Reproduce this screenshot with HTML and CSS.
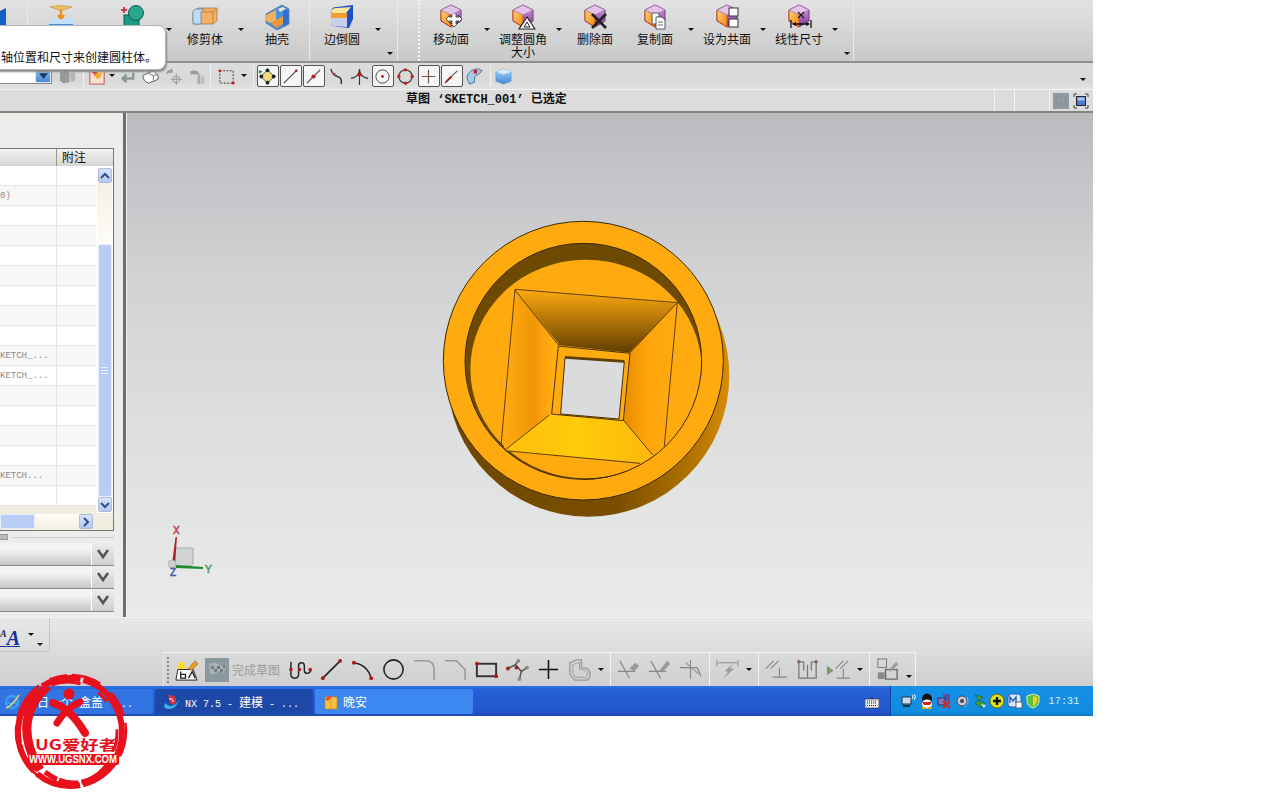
FILE: index.html
```html
<!DOCTYPE html>
<html lang="zh">
<head>
<meta charset="utf-8">
<title>NX 7.5 - 建模</title>
<link rel="stylesheet" href="styles.css">
</head>
<body>
<svg class="defs" width="0" height="0" aria-hidden="true">
  <defs>
    <linearGradient id="gOrange" x1="0" y1="0" x2="1" y2="1"><stop offset="0" stop-color="#ffd070"/><stop offset="1" stop-color="#f08a10"/></linearGradient>
    <linearGradient id="gPurple" x1="0" y1="0" x2="0" y2="1"><stop offset="0" stop-color="#d8a8e0"/><stop offset="1" stop-color="#7c3596"/></linearGradient>
    <linearGradient id="gBlue" x1="0" y1="0" x2="0" y2="1"><stop offset="0" stop-color="#a8d8f8"/><stop offset="1" stop-color="#3f86d8"/></linearGradient>
    <symbol id="cube" viewBox="0 0 26 26">
      <path d="M13 1 23 6V17L13 23 3 17V6Z" fill="url(#gPurple)" stroke="#6b3a80"/>
      <path d="M3 7Q3 5 5 6L13 11V23L5 18Q3 17 3 15Z" fill="url(#gOrange)" stroke="#d8481a"/>
      <path d="M3 6 13 1 23 6 13 11Z" fill="#e6c4ea" stroke="#9a6cae" stroke-width=".7"/>
    </symbol>
  </defs>
</svg>

<div class="screen">
  <header class="ribbon">
    <div class="group group-a">
      <svg class="icon-cut" viewBox="0 0 6 24"><path d="M0 6 6 3V20L0 23Z" fill="#1560c8"/></svg>
    </div>
    <div class="group">
      <div class="tool"><svg class="ic" viewBox="0 0 26 26"><path d="M2 3Q13 0 24 3L15 6H11Z" fill="#f0c060" stroke="#b89040" stroke-width=".6"/><path d="M13 5V14M10 11l3 4 3-4" stroke="#e89020" stroke-width="2.4" fill="none"/><path d="M1 18 5 15H25V21H1Z" fill="#bfe0f8"/><path d="M1 20H25V26H1Z" fill="#3d90e0"/></svg><span class="lbl"></span></div>
      <span class="caret none"></span>
      <div class="tool"><svg class="ic" viewBox="0 0 26 26"><path d="M1 6H7M4 3V9" stroke="#e01030" stroke-width="1.6"/><rect x="4" y="11" width="15" height="14" fill="#1d9a8a" stroke="#0c5a52"/><circle cx="16" cy="9" r="7.5" fill="#2aa690" stroke="#0d5c50"/></svg><span class="lbl"></span></div>
      <span class="caret"></span>
      <div class="tool"><svg class="ic" viewBox="0 0 26 26"><path d="M1 8 6 4H25V17L21 20H1Z" fill="#f4b060" stroke="#8a7a60" stroke-width=".7"/><path d="M1 8Q1 5 6 5H12L9 8V20H3Q1 20 1 18Z" fill="#bcdcf4" stroke="#5a80a8" stroke-width=".7"/><path d="M9 8H21V20M21 8 25 4" fill="none" stroke="#a07a40" stroke-width=".7"/></svg><span class="lbl">修剪体</span></div>
      <span class="caret"></span>
      <div class="tool"><svg class="ic" viewBox="0 0 26 26"><path d="M2 10 18 1 25 5V20L13 26 2 19Z" fill="#4a90e0" stroke="#345" stroke-width=".5"/><path d="M2 11 12 6V17L6 19 2 17Z" fill="#f0b060"/><path d="M7 19 19 12V20L12 24Z" fill="#e89838"/><path d="M19 4 24 6V20L19 23Z" fill="#2f70d0"/><path d="M14 5 19 3 22 5 16 8Z" fill="#e8e4d0"/></svg><span class="lbl">抽壳</span></div>
    </div>
    <div class="group">
      <div class="tool"><svg class="ic" viewBox="0 0 26 26"><path d="M2 8Q2 3 8 3L24 1V15L20 24 4 22Q2 22 2 20Z" fill="#1a50c8"/><path d="M2 8Q2 4 8 4L22 3 17 9H3Z" fill="#fbe69a"/><path d="M2 9H18V14H2Z" fill="#f0a030"/><path d="M2 14H18V23L4 22Q2 22 2 20Z" fill="#c8d0ec"/></svg><span class="lbl">边倒圆</span></div>
      <span class="caret"></span>
      <span class="caret low"></span>
    </div>
    <div class="group group-d">
      <div class="tool"><svg class="ic" viewBox="0 0 26 26"><use href="#cube"/><path d="M17 9v3h3l-1-2 4 4-4 4 1-2h-3v3l2-1-4 4-4-4 2 1v-3h-3l1 2-4-4 4-4-1 2h3V9" transform="translate(1 1)" fill="#fff" stroke="#333" stroke-width=".8"/></svg><span class="lbl">移动面</span></div>
      <span class="caret"></span>
      <div class="tool"><svg class="ic" viewBox="0 0 26 26"><use href="#cube"/><path d="M17 13 25 25H9Z" fill="#fff" stroke="#222" stroke-width="1.2"/><path d="M17 18 20 23H14Z" fill="none" stroke="#222"/></svg><span class="lbl">调整圆角<br>大小</span></div>
      <span class="caret"></span>
      <div class="tool"><svg class="ic" viewBox="0 0 26 26"><use href="#cube"/><path d="M10 10 24 24M24 10 10 24" stroke="#222" stroke-width="2.6"/></svg><span class="lbl">删除面</span></div>
      <div class="tool"><svg class="ic" viewBox="0 0 26 26"><use href="#cube"/><path d="M10 9H17V20H10Z" fill="#fff" stroke="#556"/><path d="M14 13H20L23 16V25H14Z" fill="#fff" stroke="#556"/><path d="M16 18H21M16 21H21" stroke="#667"/></svg><span class="lbl">复制面</span></div>
      <span class="caret"></span>
      <div class="tool"><svg class="ic" viewBox="0 0 26 26"><use href="#cube"/><rect x="15" y="4" width="9" height="8" fill="#fff" stroke="#333"/><rect x="15" y="15" width="9" height="8" fill="#fff" stroke="#333"/></svg><span class="lbl">设为共面</span></div>
      <span class="caret"></span>
      <div class="tool"><svg class="ic" viewBox="0 0 26 26"><use href="#cube"/><path d="M12 8 18 14M18 8 12 14" stroke="#222" stroke-width="1.3"/><path d="M5 16V24M25 16V24M7 20H23" stroke="#111" stroke-width="1.3" fill="none"/><path d="M6 20 10 18V22ZM24 20 20 18V22Z" fill="#111"/></svg><span class="lbl">线性尺寸</span></div>
      <span class="caret"></span>
      <span class="caret low"></span>
    </div>
  </header>

  <div class="toolbar">
    <div class="combo"><span class="combo-btn"><svg viewBox="0 0 12 8"><path d="M1 1H11L6 7Z" fill="#1d3560"/></svg></span></div>
    <span class="ib"><svg viewBox="0 0 20 20"><path d="M2 6 9 3 12 5V16L5 17 2 14Z" fill="#999"/><path d="M12 6H18V14L14 16Z" fill="#b5b5b5"/></svg></span>
    <span class="vsep vs1"></span>
    <span class="ib"><svg viewBox="0 0 20 20"><rect x="2" y="3" width="15" height="15" fill="#f8e0d0" stroke="#c05050"/><path d="M6 6H15L12 12H9Z" fill="#f0b020"/><path d="M7 3V9M4 6H10" stroke="#c01818"/></svg></span>
    <span class="caret-s"></span>
    <span class="ib"><svg viewBox="0 0 20 20"><path d="M16 6V12H6M9 8 5 12 9 16" fill="none" stroke="#8a9a8a" stroke-width="2.6"/></svg></span>
    <span class="ib"><svg viewBox="0 0 20 20"><path d="M2 9 13 4 18 9V13L8 17Q2 15 2 9Z" fill="#fff" stroke="#555"/><path d="M8 7 13 9V14M13 9 18 8" fill="none" stroke="#777"/></svg></span>
    <span class="ib ib-g"><svg viewBox="0 0 20 20"><path d="M3 7Q5 2 9 5M9 5 7 2M9 5 5 6" fill="none" stroke="#999" stroke-width="1.6"/><circle cx="13" cy="13" r="3.5" fill="none" stroke="#999"/><path d="M13 7V19M7 13H19" stroke="#999"/></svg></span>
    <span class="ib"><svg viewBox="0 0 20 20"><path d="M3 5Q8 2 13 6L10 8Q7 7 4 8Z" fill="#999"/><path d="M11 7H14V18H11Z" fill="#aaa"/><path d="M15 10H18V18H15Z" fill="#bbb"/></svg></span>
    <span class="vsep vs2"></span>
    <span class="ib"><svg viewBox="0 0 20 20"><rect x="3" y="4" width="14" height="13" fill="none" stroke="#333" stroke-dasharray="2 1.5"/><circle cx="3" cy="4" r="1.5" fill="#c02020"/><circle cx="17" cy="17" r="1.5" fill="#c02020"/></svg></span>
    <span class="caret-s wide"></span>
    <span class="vsep vs3"></span>
    <span class="bx"><svg viewBox="0 0 20 20"><path d="M10 3 17 10 10 17 3 10Z" fill="#f0dc80" stroke="#555"/><circle cx="10" cy="3.5" r="2" fill="#222"/><circle cx="10" cy="16.5" r="2" fill="#222"/><circle cx="3.5" cy="10" r="2" fill="#222"/><circle cx="16.5" cy="10" r="2" fill="#222"/><path d="M1 3 5 5 1 7Z" fill="#209030"/></svg></span>
    <span class="bx"><svg viewBox="0 0 20 20"><path d="M3 17 17 3" stroke="#444" stroke-width="1.2"/><circle cx="16" cy="4" r="1.5" fill="#c02020"/></svg></span>
    <span class="bx"><svg viewBox="0 0 20 20"><path d="M3 17 17 3" stroke="#444" stroke-width="1.2"/><circle cx="10" cy="10" r="2.2" fill="#c02020"/></svg></span>
    <span class="ib"><svg viewBox="0 0 20 20"><path d="M4 2Q6 9 11 10T15 18" fill="none" stroke="#333" stroke-width="1.4"/><circle cx="8" cy="7" r="1" fill="#c02020"/></svg></span>
    <span class="ib"><svg viewBox="0 0 20 20"><path d="M1 12Q10 10 10 2Q10 10 19 12M10 9V19" fill="none" stroke="#333" stroke-width="1.2"/><circle cx="10" cy="8" r="2" fill="#c02020"/></svg></span>
    <span class="bx"><svg viewBox="0 0 20 20"><circle cx="10" cy="10" r="7" fill="none" stroke="#444"/><circle cx="10" cy="10" r="1.5" fill="#c02020"/></svg></span>
    <span class="ib"><svg viewBox="0 0 20 20"><circle cx="10" cy="10" r="7" fill="none" stroke="#444" stroke-width="1.4"/><circle cx="10" cy="3" r="1.8" fill="#c02020"/><circle cx="10" cy="17" r="1.8" fill="#c02020"/><circle cx="3" cy="10" r="1.8" fill="#c02020"/><circle cx="17" cy="10" r="1.8" fill="#c02020"/></svg></span>
    <span class="bx"><svg viewBox="0 0 20 20"><path d="M10 3V17M3 10H17" stroke="#7a5040" stroke-width="1.2"/></svg></span>
    <span class="bx"><svg viewBox="0 0 20 20"><path d="M3 17 16 4" stroke="#555" stroke-width="1.2"/><path d="M4 16 10 10" stroke="#a02020" stroke-width="2"/></svg></span>
    <span class="ib"><svg viewBox="0 0 20 20"><path d="M2 10Q5 2 14 2L18 4 14 8Q9 8 10 16L5 18Q2 14 2 10Z" fill="#a8c8e8" stroke="#47709a"/><circle cx="11" cy="5" r="2" fill="#c02020"/></svg></span>
    <span class="vsep vs4"></span>
    <span class="ib"><svg viewBox="0 0 20 20"><path d="M2 5 10 2 18 5V15L10 18 2 15Z" fill="url(#gBlue)" stroke="#5a94c8" stroke-width=".6"/><path d="M2 5 10 8 18 5 10 2Z" fill="#d8ecfa"/></svg></span>
    <span class="caret-s end"></span>
  </div>

  <div class="status">
    <div class="status-text">草图 ‘SKETCH_001’ 已选定</div>
    <span class="st-cell c1"></span>
    <span class="st-cell c2"></span>
    <span class="st-icons">
      <span class="st-flag"><svg viewBox="0 0 16 16"><path d="M3 4H13V11H3Z" fill="#8d9a9f" stroke="#7b8a8f" stroke-dasharray="2 2"/></svg></span>
      <span class="st-full"><svg viewBox="0 0 16 16"><path d="M1 4V1H4M12 1H15V4M15 12V15H12M4 15H1V12" fill="none" stroke="#444"/><rect x="3.5" y="3.5" width="9" height="9" fill="#4a7cc8" stroke="#223"/><rect x="4.5" y="4.5" width="7" height="3" fill="#a8c8f0"/></svg></span>
    </span>
  </div>

  <main class="main">
    <aside class="panel">
      <div class="tree">
        <div class="tree-head"><span class="th-a"></span><span class="th-b">附注</span></div>
        <div class="tree-body">
          <div class="rows">
            <div class="row"><span class="cn"></span><span class="cm"></span></div>
            <div class="row"><span class="cn">0)</span><span class="cm"></span></div>
            <div class="row"><span class="cn"></span><span class="cm"></span></div>
            <div class="row"><span class="cn"></span><span class="cm"></span></div>
            <div class="row"><span class="cn"></span><span class="cm"></span></div>
            <div class="row"><span class="cn"></span><span class="cm"></span></div>
            <div class="row"><span class="cn"></span><span class="cm"></span></div>
            <div class="row"><span class="cn"></span><span class="cm"></span></div>
            <div class="row"><span class="cn"></span><span class="cm"></span></div>
            <div class="row"><span class="cn">KETCH_...</span><span class="cm"></span></div>
            <div class="row"><span class="cn">KETCH_...</span><span class="cm"></span></div>
            <div class="row"><span class="cn"></span><span class="cm"></span></div>
            <div class="row"><span class="cn"></span><span class="cm"></span></div>
            <div class="row"><span class="cn"></span><span class="cm"></span></div>
            <div class="row"><span class="cn"></span><span class="cm"></span></div>
            <div class="row"><span class="cn">KETCH...</span><span class="cm"></span></div>
            <div class="row"><span class="cn"></span><span class="cm"></span></div>
          </div>
          <div class="vscroll">
            <span class="sb-btn"><svg viewBox="0 0 12 12"><path d="M2 8 6 4 10 8" fill="none" stroke="#2e4f8c" stroke-width="2"/></svg></span>
            <span class="sb-track"></span>
            <span class="sb-thumb"><i></i></span>
            <span class="sb-btn"><svg viewBox="0 0 12 12"><path d="M2 4 6 8 10 4" fill="none" stroke="#2e4f8c" stroke-width="2"/></svg></span>
          </div>
        </div>
        <div class="hscroll">
          <span class="hs-thumb"></span>
          <span class="hs-track"></span>
          <span class="sb-btn"><svg viewBox="0 0 12 12"><path d="M4 2 8 6 4 10" fill="none" stroke="#2e4f8c" stroke-width="2"/></svg></span>
          <span class="hs-corner"></span>
        </div>
      </div>
      <div class="sash"><span class="sash-grip"></span><span class="sash-line"></span></div>
      <div class="fold"><span class="fold-main"></span><span class="fold-btn"><svg viewBox="0 0 14 12"><path d="M2 2 7 9 12 2" fill="none" stroke="#555" stroke-width="2.6"/></svg></span></div>
      <div class="fold"><span class="fold-main"></span><span class="fold-btn"><svg viewBox="0 0 14 12"><path d="M2 2 7 9 12 2" fill="none" stroke="#555" stroke-width="2.6"/></svg></span></div>
      <div class="fold"><span class="fold-main"></span><span class="fold-btn"><svg viewBox="0 0 14 12"><path d="M2 2 7 9 12 2" fill="none" stroke="#555" stroke-width="2.6"/></svg></span></div>
    </aside>
    <section class="viewport">
      <svg class="model" viewBox="0 0 930 960">
        <defs>
          <linearGradient id="mSide" x1="0" y1="0" x2="1" y2="0"><stop offset="0" stop-color="#6e4700"/><stop offset=".6" stop-color="#7a4e00"/><stop offset=".9" stop-color="#b87800"/><stop offset="1" stop-color="#d88c08"/></linearGradient>
          <linearGradient id="mTop" x1="0" y1="0" x2="0" y2="1"><stop offset="0" stop-color="#ffab10"/><stop offset=".45" stop-color="#b87808"/><stop offset="1" stop-color="#5e3e00"/></linearGradient>
          <linearGradient id="mLeft" x1="0" y1="0" x2="1" y2="0"><stop offset="0" stop-color="#ffab10"/><stop offset=".55" stop-color="#f09608"/><stop offset=".75" stop-color="#ffa40c"/><stop offset="1" stop-color="#ffb414"/></linearGradient>
          <linearGradient id="mRight" x1="0" y1="0" x2="1" y2="0"><stop offset="0" stop-color="#e88c00"/><stop offset=".45" stop-color="#ffa40c"/><stop offset="1" stop-color="#ffab10"/></linearGradient>
          <linearGradient id="mBot" x1="0" y1="0" x2="1" y2="0"><stop offset="0" stop-color="#ffbe0c"/><stop offset=".5" stop-color="#ffcb0a"/><stop offset="1" stop-color="#ffb80c"/></linearGradient>
        </defs>
        <circle cx="475" cy="497" r="423" fill="url(#mSide)"/>
        <ellipse cx="460" cy="452" rx="420" ry="418" fill="#ffab10" stroke="#3e2a00" stroke-width="3"/>
        <ellipse cx="460" cy="454" rx="355" ry="354" fill="#6e4a00" stroke="#3e2a00" stroke-width="3"/>
        <ellipse cx="468" cy="477" rx="347" ry="328" fill="#ffab10"/>
        <path d="M460 808A355 354 0 0 0 815 454" fill="none" stroke="#3e2a00" stroke-width="3"/>
        <path d="M255 238 742 278 670 735 225 722Z" fill="#ffab10"/>
        <path d="M255 238 385 405 600 428 740 280Z" fill="url(#mTop)"/>
        <path d="M255 240 385 400 365 612 222 715Z" fill="url(#mLeft)"/>
        <path d="M740 285 600 425 582 630 668 732 703 705Z" fill="url(#mRight)"/>
        <path d="M225 722 358 615 580 630 670 735 635 758Z" fill="url(#mBot)"/>
        <path d="M385 408 600 430 580 632 365 612Z" fill="#ffab10" stroke="#4a3200" stroke-width="3"/>
        <path d="M405 443 583 455 567 627 392 612Z" fill="#d9dbdc" stroke="#4a3200" stroke-width="3"/>
        <path d="M405 438 583 450V458L405 446Z" fill="#5e3e00"/>
        <path d="M255 238 742 278 703 708M255 238 213 708M225 722 630 760M255 240 385 405M740 280 600 428M225 720 358 615M668 735 580 630" fill="none" stroke="#3e2a00" stroke-width="2.5"/>
      </svg>
      <svg class="triad" viewBox="0 0 50 50">
        <path d="M8 13 10 11H26V27L24 29H8Z" fill="#d2d3d3" stroke="#a8a8a8"/>
        <path d="M5 27 8.500 0 10 0 8 27Z" fill="#b0202c"/>
        <path d="M9 28 36 30 36 32 9 31Z" fill="#1f8a2c"/>
        <circle cx="5" cy="27" r="4" fill="#cfcfcf" stroke="#999" stroke-width=".5"/>
        <text class="tx" x="6" y="-3.500">X</text>
        <text class="ty" x="38" y="35.500">Y</text>
        <text class="tz" x="3" y="39">Z</text>
      </svg>
    </section>
  </main>

  <footer class="bottom">
    <div class="bt-row1">
      <div class="font-box"><span class="font-a"><small>A</small>A</span><span class="caret-s"></span><span class="caret-s drop"></span></div>
    </div>
    <div class="bt-row2">
      <div class="sketchbar">
        <span class="handle"></span>
        <span class="st"><svg viewBox="0 0 26 26"><path d="M6 3 8 7 12 5 10 9 14 10 10 12 11 16 8 13 5 16 5 12 2 11 6 9 3 6 6 7Z" fill="#ffd820"/><path d="M4 13H20L24 24H2Z" fill="#fff" stroke="#222"/><path d="M7 15V22H12V18H7M15 22 19 15 22 22" fill="none" stroke="#222" stroke-width="1.4"/><path d="M15 12 22 4 25 7 18 14Z" fill="#f0a020" stroke="#805010" stroke-width=".6"/></svg></span>
        <span class="finish"><svg viewBox="0 0 24 24"><rect width="24" height="24" fill="#8b989d"/><path d="M4 6Q9 3 13 6T21 6L19 15Q15 12 11 15T5 15Z" fill="#aab2b4"/><path d="M6 8H9V11H6ZM12 8H15V11H12ZM18 7H20V10H18ZM9 11H12V14H9ZM15 11H18V14H15Z" fill="#6f7d82"/></svg></span>
        <span class="finish-text">完成草图</span>
        <span class="st"><svg viewBox="0 0 26 26"><path d="M3 5V18Q3 22 7 22T11 18V9Q11 6 14 6T17 9V14Q17 17 20 17T24 13" fill="none" stroke="#222" stroke-width="1.5"/><circle cx="3" cy="13" r="1.8" fill="#b01818"/><circle cx="12" cy="13" r="1.8" fill="#b01818"/><circle cx="23" cy="13" r="1.8" fill="#b01818"/></svg></span>
        <span class="st"><svg viewBox="0 0 26 26"><path d="M4 22 22 4" stroke="#222" stroke-width="1.6"/><circle cx="4" cy="22" r="2" fill="#b01818"/><circle cx="22" cy="4" r="2" fill="#b01818"/></svg></span>
        <span class="st"><svg viewBox="0 0 26 26"><path d="M4 6Q18 8 22 22" fill="none" stroke="#222" stroke-width="1.6"/><circle cx="4" cy="6" r="2" fill="#b01818"/><circle cx="22" cy="22" r="2" fill="#b01818"/></svg></span>
        <span class="st"><svg viewBox="0 0 26 26"><circle cx="13" cy="13" r="10" fill="none" stroke="#222" stroke-width="1.6"/></svg></span>
        <span class="st"><svg viewBox="0 0 26 26"><path d="M2 4H14Q23 4 23 13V24" fill="none" stroke="#999" stroke-width="1.6"/></svg></span>
        <span class="st"><svg viewBox="0 0 26 26"><path d="M2 4H14L23 13V24" fill="none" stroke="#999" stroke-width="1.6"/></svg></span>
        <span class="st"><svg viewBox="0 0 26 26"><rect x="3" y="7" width="20" height="13" fill="none" stroke="#333" stroke-width="2"/><circle cx="3" cy="7" r="2" fill="#b01818"/><circle cx="23" cy="20" r="2" fill="#b01818"/></svg></span>
        <span class="st"><svg viewBox="0 0 26 26"><path d="M3 12 11 8 17 15 23 11M11 8 14 3M17 15 15 23" fill="none" stroke="#555" stroke-width="1.6"/><circle cx="3" cy="12" r="2" fill="#a02020"/><circle cx="12" cy="11" r="2" fill="#a02020"/><circle cx="23" cy="11" r="2" fill="#888"/><circle cx="14" cy="4" r="2" fill="#888"/><circle cx="15" cy="23" r="2" fill="#888"/></svg></span>
        <span class="st"><svg viewBox="0 0 26 26"><path d="M13 3V23M3 13H23" stroke="#111" stroke-width="1.6"/></svg></span>
        <span class="st"><svg viewBox="0 0 26 26"><path d="M3 6 10 3H15V11Q24 11 24 18T17 24H8L3 18Z" fill="none" stroke="#999" stroke-width="1.4"/><path d="M6 8 11 6H13V13Q21 13 21 18T16 21H9L6 17Z" fill="none" stroke="#999"/></svg></span>
        <span class="caret-m"></span>
        <span class="vsep vb"></span>
        <span class="st"><svg viewBox="0 0 26 26"><path d="M4 4 14 22M2 15H20" stroke="#888" stroke-width="1.2"/><path d="M14 12 20 6 24 9 19 15Z" fill="#999"/></svg></span>
        <span class="st"><svg viewBox="0 0 26 26"><path d="M4 4 14 22M2 15H20" stroke="#888" stroke-width="1.2"/><path d="M13 14 21 4 24 7 16 16Z" fill="#999"/></svg></span>
        <span class="st"><svg viewBox="0 0 26 26"><path d="M13 3V23M2 11H20L24 20" stroke="#888" fill="none" stroke-width="1.2"/><path d="M8 6 22 18" stroke="#999" stroke-width="1.2"/></svg></span>
        <span class="vsep vb"></span>
        <span class="st"><svg viewBox="0 0 26 26"><path d="M2 3V10M24 3V10M3 6H23" stroke="#888" fill="none"/><path d="M16 9 10 15H14L8 23 20 12H15L19 8Z" fill="#999"/></svg></span>
        <span class="caret-m"></span>
        <span class="vsep vb"></span>
        <span class="st"><svg viewBox="0 0 26 26"><path d="M2 12 10 4M7 12 15 4M9 21H24M16 11V21" stroke="#888" fill="none" stroke-width="1.2"/></svg></span>
        <span class="st"><svg viewBox="0 0 26 26"><path d="M4 5V22H22V5M4 5H9M22 5H17M9 5V14M17 5V14M13 8V22" fill="none" stroke="#777" stroke-width="1.3"/><circle cx="4" cy="5" r="1.8" fill="#8a6060"/><circle cx="22" cy="5" r="1.8" fill="#8a6060"/></svg></span>
        <span class="st"><svg viewBox="0 0 26 26"><path d="M1 9 8 14 1 19Z" fill="#7c9a6c"/><path d="M10 12 18 4M15 12 23 4M11 22H25M18 12V22" stroke="#888" fill="none" stroke-width="1.2"/></svg></span>
        <span class="caret-m"></span>
        <span class="vsep vb"></span>
        <span class="st"><svg viewBox="0 0 26 26"><rect x="3" y="2" width="9" height="9" fill="none" stroke="#777"/><rect x="11" y="13" width="12" height="10" fill="none" stroke="#666" stroke-width="1.3"/><rect x="3" y="16" width="7" height="7" fill="#888"/><path d="M14 14 22 5 24 8 16 15Z" fill="#999"/></svg></span>
        <span class="caret-m low"></span>
      </div>
    </div>
  </footer>

  <nav class="taskbar">
    <div class="task t1"><svg class="task-ic" viewBox="0 0 16 16"><circle cx="8" cy="8" r="6" fill="none" stroke="#3aa0e8" stroke-width="2.4"/><path d="M3 9H13" stroke="#3aa0e8" stroke-width="1.6"/><path d="M2 14Q8 12 15 1" fill="none" stroke="#e8d070" stroke-width="1.4"/></svg><span><b class="cjk">日一个</b> <b class="cjk">盒盖</b>  ...</span></div>
    <div class="task t2"><svg class="task-ic" viewBox="0 0 16 16"><path d="M1 9Q8 16 15 6Q12 15 5 15T1 9Z" fill="#3ab0e0"/><path d="M4 1Q13 1 12 7T6 9Z" fill="#d83040"/><path d="M5 5Q9 4 9 8" stroke="#fff" fill="none"/></svg><span>NX 7.5 - <b class="cjk">建模</b> - ...</span></div>
    <div class="task t3"><svg class="task-ic" viewBox="0 0 16 16"><path d="M2 3H14V15H2Z" fill="#f8c040" stroke="#c08018" stroke-width=".6"/><path d="M2 5 7 1 9 3 5 7Z" fill="#e85030"/><path d="M8 5V15" stroke="#e0a028"/></svg><span>晚安</span></div>
    <div class="kbd"><svg viewBox="0 0 14 12"><rect y="2" width="14" height="9" fill="#eee" stroke="#222" stroke-width=".6"/><path d="M2 4H12M2 6H12M2 8.500H12" stroke="#222" stroke-dasharray="1 1"/><path d="M7 2V0" stroke="#222"/></svg></div>
    <div class="tray">
      <svg class="tr" viewBox="0 0 16 16"><rect x="1" y="4" width="9" height="7" fill="#c8d8f0" stroke="#234"/><path d="M2 13H9" stroke="#234" stroke-width="2"/><path d="M11 6Q13 4 11 2M13 7Q16 4 13 1" fill="none" stroke="#fff"/></svg>
      <svg class="tr" viewBox="0 0 16 16"><ellipse cx="8" cy="6" rx="5" ry="5.500" fill="#111"/><ellipse cx="8" cy="11" rx="5" ry="4.500" fill="#fff"/><path d="M3 9H13L11 12H5Z" fill="#d82020"/><path d="M3 15H7M9 15H13" stroke="#f0a010" stroke-width="2"/></svg>
      <svg class="tr" viewBox="0 0 16 16"><rect x="7" y="1" width="7" height="7" fill="#5a50a8"/><rect x="2" y="5" width="7" height="7" fill="#8078c0" stroke="#334"/><path d="M7 8 14 15M14 8 7 15" stroke="#e02020" stroke-width="2"/></svg>
      <svg class="tr" viewBox="0 0 16 16"><circle cx="8" cy="8" r="5" fill="#c8c8d0" stroke="#445"/><circle cx="8" cy="8" r="2" fill="#445"/><path d="M13 4Q16 10 10 14" fill="none" stroke="#8cb8e8"/></svg>
      <svg class="tr" viewBox="0 0 16 16"><path d="M3 2 11 4 7 8 13 10 9 15 3 10 7 7Z" fill="#3ca03c" stroke="#1a4a20" stroke-width=".5"/><path d="M9 11 14 12 12 15Z" fill="#ddd"/></svg>
      <svg class="tr" viewBox="0 0 16 16"><circle cx="8" cy="8" r="7" fill="#e0e020" stroke="#6a6a10"/><path d="M8 4V12M4 8H12" stroke="#111" stroke-width="2.4"/></svg>
      <svg class="tr" viewBox="0 0 16 16"><rect x="1" y="1" width="13" height="13" rx="3" fill="#d8e8f8" stroke="#2a60b0"/><path d="M3 10V4L6 8 9 4V10" fill="none" stroke="#2a60b0" stroke-width="1.4"/><rect x="9" y="9" width="6" height="6" fill="#fff" stroke="#567"/></svg>
      <svg class="tr" viewBox="0 0 16 16"><path d="M8 1 14 3V8Q14 13 8 15 2 13 2 8V3Z" fill="#60c040" stroke="#e8f0a0"/><path d="M8 3V13Q12 11 12 7V4Z" fill="#f0d020"/></svg>
      <span class="clock">17:31</span>
    </div>
  </nav>

  <div class="tooltip">轴位置和尺寸来创建圆柱体。</div>

  <svg class="stamp" viewBox="0 660 140 140">
    <g fill="none" stroke="#e8101c">
      <ellipse cx="70" cy="732" rx="52" ry="54" stroke-width="6" stroke-dasharray="70 3 46 4 30 2 60 5 40 3"/>
      <ellipse cx="71" cy="731" rx="55" ry="56" stroke-width="2.500" stroke-dasharray="26 8 40 12 18 5 30 14"/>
      <ellipse cx="68" cy="733" rx="49" ry="51" stroke-width="3" stroke-dasharray="18 12 30 20 12 30 50 16"/>
      <path d="M48 686Q10 720 40 770" stroke-width="9"/>
      <path d="M45 772Q75 795 105 770" stroke-width="5" stroke-dasharray="14 2 20 3"/>
      <path d="M53 703Q70 708 85 733" stroke-width="8" stroke-linecap="round"/>
      <path d="M80 702Q66 708 57 723" stroke-width="7" stroke-linecap="round"/>
    </g>
    <circle cx="69" cy="694" r="5.500" fill="#e8101c"/>
    <text class="stamp-t" x="76" y="750" text-anchor="middle" textLength="82" lengthAdjust="spacingAndGlyphs">UG爱好者</text>
    <rect x="28" y="754" width="91" height="11" rx="2" fill="#e8101c"/>
    <text class="stamp-u" x="73" y="763" text-anchor="middle" textLength="88" lengthAdjust="spacingAndGlyphs">WWW.UGSNX.COM</text>
  </svg>
</div>
</body>
</html>
```

FILE: styles.css
```css
* { box-sizing: border-box; }
html, body { margin: 0; padding: 0; background: #fff; }
body { width: 1280px; height: 800px; overflow: hidden; font-family: "Liberation Mono", "Noto Sans CJK SC", monospace; font-size: 12px; color: #111; }
.defs { position: absolute; }
.screen { position: relative; width: 1093px; height: 716px; display: flex; flex-direction: column; }

/* Ribbon */
.ribbon { height: 63px; flex: none; display: flex; background: linear-gradient(#e2e2e2, #c9c9c9); border-bottom: 2px solid #8f8f8f; }
.group { display: flex; height: 61px; padding-left: 3px; border-right: 1px solid #e9e9e9; position: relative; }
.group:nth-child(2) { width: 282px; }
.group:nth-child(3) { width: 88px; padding-left: 2px; }
.group-a { width: 28px; padding: 5px 0 0; }
.group:nth-child(n).group-d { width: 436px; margin-left: 20px; padding-left: 1px; border-left: 2px dotted #f4f4f4; }
.icon-cut { width: 6px; height: 24px; }
.tool { width: 60px; flex: none; display: flex; flex-direction: column; align-items: center; padding-top: 4px; }
.ic { width: 26px; height: 26px; flex: none; }
.lbl { margin-top: 2px; font-family: "Noto Sans CJK SC", sans-serif; font-size: 12px; line-height: 13px; text-align: center; white-space: nowrap; }
.caret { width: 12px; flex: none; position: relative; }
.caret::after { content: ""; position: absolute; left: 3px; top: 28px; border: 3px solid transparent; border-top: 3px solid #111; border-bottom: 0; }
.caret.none::after { display: none; }
.caret.low::after { top: 52px; }

/* Row 2 */
.toolbar { height: 26px; flex: none; display: flex; align-items: center; background: linear-gradient(#dcdcdc, #d9d9d9 70%, #e2e2e2); }
.combo { width: 52px; height: 15px; flex: none; margin-right: 4px; background: #fff; border: 1px solid #8a8a8a; border-left: 0; display: flex; justify-content: flex-end; }
.combo-btn { width: 16px; background: linear-gradient(#8ab8ec, #4a86d4); border: 1px solid #d8e6f8; border-radius: 2px; display: flex; align-items: center; justify-content: center; }
.combo-btn svg { width: 11px; height: 8px; }
.ib, .bx { width: 23px; height: 23px; flex: none; display: flex; align-items: center; justify-content: center; }
.ib svg, .bx svg { width: 19px; height: 19px; }
.bx { background: #f6f6f6; border: 1px solid #555; border-radius: 2px; width: 22px; height: 22px; margin: 0 .5px; }
.vsep { flex: none; width: 1px; align-self: stretch; background: #f2f2f2; }
.vs1 { margin: 2px 2px 2px 4px; }
.vs2 { margin: 2px 4px 2px 2px; }
.vs3 { margin: 2px 2px 2px 3px; }
.vs4 { margin: 2px 1px 2px 4px; }
.caret-s { width: 7px; height: 6px; flex: none; position: relative; }
.caret-s::after { content: ""; position: absolute; left: 0; top: 1px; border: 3px solid transparent; border-top: 3px solid #111; border-bottom: 0; }
.caret-s.wide { width: 12px; }
.caret-s.wide::after { left: 3px; }
.caret-s.end { margin-left: auto; margin-right: 6px; margin-top: 8px; }

/* Status */
.status { height: 24px; flex: none; display: flex; background: #dcdcdc; border-top: 1px solid #f4f4f4; border-bottom: 2px solid #85857c; }
.status-text { width: 995px; padding-left: 406px; font: bold 12px/20px "Liberation Mono", "Noto Sans CJK SC", monospace; white-space: nowrap; border-right: 1px solid #f4f4f4; }
.st-cell { flex: none; border-right: 1px solid #f4f4f4; }
.c1 { width: 20px; }
.c2 { width: 35px; }
.st-icons { flex: 1; display: flex; align-items: center; padding-left: 3px; gap: 4px; }
.st-flag { width: 16px; height: 16px; background: #8d9a9f; }
.st-full { width: 16px; height: 16px; }
.st-flag svg, .st-full svg { display: block; width: 16px; height: 16px; }

/* Main */
.main { height: 504px; flex: none; display: flex; }
.panel { width: 127px; flex: none; background: #ececea; padding-top: 35px; box-shadow: inset -1px 0 0 #f0f0f0, inset -4px 0 0 #6e6e6e; }
.tree { width: 114px; height: 383px; border: 1px solid #777; border-left: 0; background: #efece0; display: flex; flex-direction: column; }
.tree-head { height: 17px; flex: none; display: flex; background: linear-gradient(#f4f4f2, #d4d4d2); }
.th-a { width: 57px; border-right: 1px solid #999; }
.th-b { flex: 1; padding-left: 5px; font: 12px/16px "Noto Sans CJK SC", sans-serif; }
.tree-body { height: 347px; flex: none; display: flex; overflow: hidden; }
.rows { width: 96px; flex: none; }
.row { height: 20px; display: flex; background: #fff; border-bottom: 1px solid #e6e6e6; }
.row:nth-child(even) { background: #f7f7f5; }
.cn { width: 57px; flex: none; border-right: 1px solid #e4e4e4; font: 9px/20px "Liberation Mono", monospace; color: #8a8a8a; white-space: nowrap; overflow: hidden; }
.cm { flex: 1; }
.vscroll { flex: 1; display: flex; flex-direction: column; align-items: center; padding-top: 2px; background: #fff; }
.sb-btn { width: 14px; height: 15px; flex: none; background: linear-gradient(#d8e4fa, #b4c8f0); border: 1px solid #f0f4ff; outline: 1px solid #b0bcd0; outline-offset: -1px; border-radius: 2px; display: flex; align-items: center; justify-content: center; }
.sb-btn svg { width: 12px; height: 12px; }
.sb-track { width: 15px; height: 61px; flex: none; background: linear-gradient(#f4f0e4, #fdfcf6); }
.sb-thumb { width: 14px; height: 253px; flex: none; background: #b8ccf4; border: 1px solid #e6eeff; border-radius: 2px; display: flex; align-items: center; justify-content: center; }
.sb-thumb i { width: 7px; height: 7px; border-top: 1px solid #eef; border-bottom: 1px solid #eef; background: linear-gradient(transparent 40%, #eef 40%, #eef 60%, transparent 60%); }
.hscroll { flex: 1; display: flex; align-items: center; }
.hs-thumb { width: 35px; height: 15px; flex: none; background: #b8ccf4; border: 1px solid #e6eeff; border-radius: 2px; }
.hs-track { width: 44px; height: 15px; flex: none; background: linear-gradient(#fdfcf6, #f4f0e4); }
.hs-corner { flex: 1; }
.sash { height: 12px; display: flex; align-items: center; width: 114px; }
.sash-grip { width: 8px; height: 6px; flex: none; background: #bbb; border: 1px solid #999; border-left: 0; }
.sash-line { flex: 1; height: 1px; margin-left: 4px; background: #ccc; }
.fold { width: 114px; height: 23px; display: flex; border-bottom: 1px solid #888; }
.fold-main { flex: 1; background: linear-gradient(#f4f4f2 30%, #c6c6c4); }
.fold-btn { width: 23px; flex: none; border-left: 1px solid #fff; background: linear-gradient(#ededeb, #cfcfcd); display: flex; align-items: center; justify-content: center; }
.fold-btn svg { width: 14px; height: 12px; }
.viewport { flex: 1; position: relative; background: linear-gradient(#b9bbbe, #cfd1d3 30%, #e0e2e2 70%, #e9eaea); }
.model { position: absolute; left: 303px; top: 97px; width: 310px; height: 320px; }
.triad { position: absolute; left: 40px; top: 424px; width: 50px; height: 50px; overflow: visible; }
.triad text { font: 10px "Liberation Sans", sans-serif; fill: none; stroke-width: .6; }
.tx { stroke: #c03040; }
.ty { stroke: #3a8a4c; }
.tz { stroke: #2040a0; }

/* Bottom */
.bottom { flex: 1; display: flex; flex-direction: column; background: linear-gradient(#e8e8e8, #dadada 55%, #cfcfcf); border-top: 1px solid #f4f4f4; }
.bt-row1 { height: 34px; flex: none; }
.font-box { width: 50px; height: 34px; display: flex; align-items: flex-start; border-right: 1px solid #c4c4c4; border-bottom: 1px solid #c4c4c4; }
.font-a { width: 24px; flex: none; font: italic bold 20px/32px "Liberation Serif", serif; color: #15309a; text-decoration: underline; text-decoration-thickness: 1px; white-space: nowrap; }
.font-a small { font-size: 10px; vertical-align: 8px; color: #234; }
.font-box .caret-s { margin: 14px 0 0 4px; width: 6px; }
.font-box .drop { margin: 24px 0 0 3px; }
.bt-row2 { height: 34px; flex: none; }
.sketchbar { margin-left: 163px; width: 753px; height: 34px; display: flex; align-items: center; border-top: 1px solid #f2f2f2; border-right: 1px solid #f2f2f2; border-left: 1px solid #e6e6e6; }
.handle { width: 4px; height: 26px; flex: none; margin-left: 3px; border-left: 2px dotted #888; }
.st { width: 31px; height: 30px; flex: none; display: flex; align-items: center; justify-content: center; }
.st svg { width: 25px; height: 25px; }
.finish { width: 24px; height: 24px; flex: none; margin-left: 3px; }
.finish svg { display: block; width: 24px; height: 24px; }
.finish-text { width: 53px; flex: none; margin-left: 3px; font: 12px/14px "Noto Sans CJK SC", sans-serif; color: #9c9c9c; white-space: nowrap; }
.caret-m { width: 12px; height: 6px; flex: none; position: relative; }
.caret-m::after { content: ""; position: absolute; left: 3px; top: 1px; border: 3px solid transparent; border-top: 3px solid #111; border-bottom: 0; }
.caret-m.low { margin-top: 14px; }
.vb { margin: 0 2px 0 3px; }

/* Taskbar */
.taskbar { height: 30px; flex: none; display: flex; padding-top: 3px; align-items: stretch; background: linear-gradient(#2d74e4, #2660d8 12%, #2356ce 85%, #1c47ae); color: #fff; }
.task { flex: none; width: 158px; height: 25px; margin-right: 2px; display: flex; align-items: center; padding-left: 9px; gap: 5px; font: 10px "Liberation Mono", "Noto Sans CJK SC", monospace; white-space: pre; border-radius: 2px; }
.cjk { font: 12px "Noto Sans CJK SC", sans-serif; }
.task-ic { width: 16px; height: 16px; flex: none; }
.t1 { width: 153px; margin-right: 2px; background: #3274e4; padding-left: 4px; gap: 17px; }
.t2 { background: #1c48a8; }
.t3 { background: #3c88f0; font: 12px "Noto Sans CJK SC", sans-serif; padding-left: 8px; gap: 4px; }
.kbd { margin: 0 0 0 390px; width: 14px; flex: none; display: flex; align-items: center; }
.kbd svg { width: 14px; height: 12px; }
.tray { margin: -3px 0 0 11px; flex: 1; display: flex; align-items: center; padding-left: 10px; gap: 1.7px; background: linear-gradient(#1790e8, #0f8cde 90%, #1070c0); border-left: 1px solid #104a9a; }
.tr { width: 16px; height: 16px; flex: none; }
.clock { margin-left: 6px; font: 10px "Liberation Mono", monospace; letter-spacing: .2px; color: #dceeff; white-space: nowrap; }

/* Overlays */
.tooltip { position: absolute; left: -12px; top: 25px; width: 178px; height: 45px; padding: 23px 8px 0 0; background: #fff; border: 1px solid #b4b4b4; border-radius: 8px; box-shadow: 1px 2px 2px #888; text-align: right; font: 12px/16px "Noto Sans CJK SC", sans-serif; white-space: nowrap; }
.stamp { position: absolute; left: 0; top: 660px; width: 140px; height: 140px; overflow: visible; }
.stamp-t { font: bold 14px "Noto Sans CJK SC", "Liberation Sans", sans-serif; fill: #e8101c; }
.stamp-u { font: bold 10px "Liberation Sans", sans-serif; fill: #fff; }
```
